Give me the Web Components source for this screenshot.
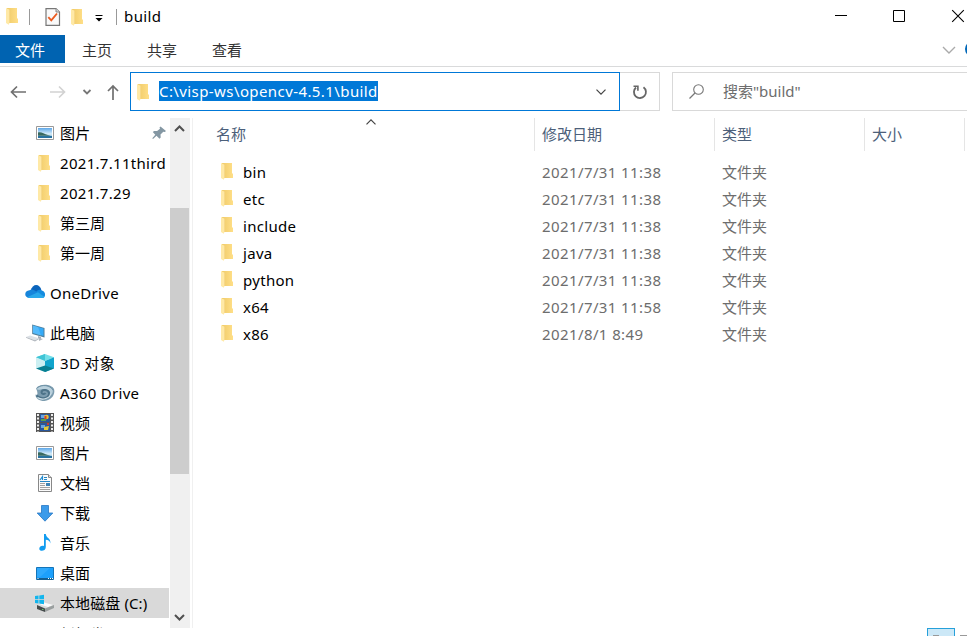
<!DOCTYPE html>
<html lang="zh-CN">
<head>
<meta charset="utf-8">
<title>build</title>
<style>
  html, body { margin: 0; height: 100%; overflow: hidden; }
  body {
    background: #fff;
    color: #000;
    font: 15px/20px "Noto Sans", "Noto Sans CJK SC", sans-serif;
  }
</style>
</head>
<body>
<explorer-window>
  <title-bar slot="top">build</title-bar>
  <ribbon-tabs slot="top">
    <ribbon-tab active>文件</ribbon-tab>
    <ribbon-tab>主页</ribbon-tab>
    <ribbon-tab>共享</ribbon-tab>
    <ribbon-tab>查看</ribbon-tab>
  </ribbon-tabs>
  <address-row slot="top">
    <span slot="path">C:\visp-ws\opencv-4.5.1\build</span>
    <span slot="search">搜索"build"</span>
  </address-row>

  <nav-pane slot="nav">
    <nav-item icon="picture" pinned>图片</nav-item>
    <nav-item icon="folder">2021.7.11third</nav-item>
    <nav-item icon="folder">2021.7.29</nav-item>
    <nav-item icon="folder" cjk>第三周</nav-item>
    <nav-item icon="folder" cjk>第一周</nav-item>
    <nav-item icon="onedrive" root>OneDrive</nav-item>
    <nav-item icon="pc" root cjk>此电脑</nav-item>
    <nav-item icon="cube">3D 对象</nav-item>
    <nav-item icon="a360">A360 Drive</nav-item>
    <nav-item icon="video" cjk>视频</nav-item>
    <nav-item icon="picture" cjk>图片</nav-item>
    <nav-item icon="document" cjk>文档</nav-item>
    <nav-item icon="download" cjk>下载</nav-item>
    <nav-item icon="music" cjk>音乐</nav-item>
    <nav-item icon="desktop" cjk>桌面</nav-item>
    <nav-item icon="disk" selected>本地磁盘 (C:)</nav-item>
    <nav-item icon="none" cjk last>新加卷</nav-item>
  </nav-pane>

  <file-list slot="files">
    <file-row date="2021/7/31 11:38" type="文件夹">bin</file-row>
    <file-row date="2021/7/31 11:38" type="文件夹">etc</file-row>
    <file-row date="2021/7/31 11:38" type="文件夹">include</file-row>
    <file-row date="2021/7/31 11:38" type="文件夹">java</file-row>
    <file-row date="2021/7/31 11:38" type="文件夹">python</file-row>
    <file-row date="2021/7/31 11:58" type="文件夹">x64</file-row>
    <file-row date="2021/8/1 8:49" type="文件夹">x86</file-row>
  </file-list>
</explorer-window>

<script>
// every icon is drawn on a 20x20 grid
const ICONS = {
  none: "",
  folder: `
    <defs><linearGradient id="g" x2="1"><stop stop-color="#f0cb69"/><stop offset="1" stop-color="#ffdf88"/></linearGradient></defs>
    <path fill="url(#g)" d="M5 2h10v10.500h1V17H5z"/>
    <path fill="#ffe9a6" d="M4 2l3.500 1.800V17l-.8 1.700L4 17z"/>
    <path fill="#f5d889" d="M7.200 4h.8v13h-.8z"/>`,
  picture: `
    <defs><linearGradient id="g" y2="1" x2="0"><stop stop-color="#5da7e8"/><stop offset=".6" stop-color="#d8eefa"/><stop offset="1" stop-color="#6fa5c8"/></linearGradient></defs>
    <path fill="#fff" stroke="#999" d="M1.500 3.500h17v13h-17z"/>
    <path fill="url(#g)" d="M3 5h14v10H3z"/>
    <path fill="#39695f" d="M3 9.500c3-1 6 1.500 10 2.500l3 .7H3z"/>
    <path fill="#2872a0" d="M3 13h14v2H3z"/>`,
  onedrive: `
    <path fill="#0a64bc" d="M5.500 8C8-.5 15 1 16.500 7.500L12 12z"/>
    <path fill="#1685db" d="M5 15C-1.500 15-1 7.500 4.500 7.200c2-1.200 4-.8 6 .8l3 3z"/>
    <path fill="#148bde" d="M10 10c2-3 5-4.200 6.800-2.600C20.800 7.800 21 14 18 15z"/>
    <path fill="#29a8ea" d="M2.500 14L13 9.200l6.400 4.500c-.7 1-1.400 1.300-2.400 1.300H5c-1 0-1.800-.4-2.500-1z"/>`,
  pc: `
    <path fill="#4e7e9b" d="M7.200 1.500L19.500 5v9.500L7.200 11z"/>
    <path fill="#35aaf7" d="M8 2.600l10.500 3v7.500L8 10z"/>
    <path fill="#7bceff" d="M8 2.600l5 1.400 3 8.400L8 10z" opacity=".45"/>
    <path fill="#a5afb9" d="M13 13l3 1v2l-3-.7z"/>
    <path fill="#dce1e6" d="M1 14l4-1.500 9 2.800-4 2z"/>
    <path fill="#b0b6bd" d="M1 14l9 3.300 4-2v.8l-4 2.400-9-3.700zM14 15l4 1-4 2z"/>`,
  cube: `
    <path fill="#72dfe8" d="M10 1l9 3.200L10 8 1 4.200z"/>
    <path fill="#cceff2" d="M1 4.200L10 8v11l-9-3.500z"/>
    <path fill="#10a4cc" d="M19 4.200L10 8v11l9-3.500z"/>
    <path fill="#087f91" d="M1 15.500l9-3 9 3-9 3.500z"/>
    <path fill="#40c4d5" d="M10 1v7L1 4.200z"/>`,
  a360: `
    <path fill="#7c9caf" d="M1 5.500C4 .5 16 .5 19 6c1.500 5-2 11.500-9.500 12C4 18 .5 15.500.5 11.500 3 13 3 9 1 5.500z"/>
    <path fill="#b9d0dc" d="M1.500 6C5 1 15 2 17.500 6.500c1 3-.5 5-2 6C16 8 12 5.500 8 6c-3 .3-4.500 1.500-6.500 0z"/>
    <path fill="none" stroke="#4d7389" stroke-width="2" d="M1.500 12.500c5 4.500 13 3 12.500-2.500-.5-3.500-7-4-7.500-.8 0 2 3 2.300 4 .8"/>
    <path fill="none" stroke="#d3e3eb" stroke-width="1.100" d="M2.500 14.500c5 3.500 13 .5 13-4"/>
    <path fill="none" stroke="#6f93a7" d="M2 5c5-4 13-3 16 2"/>`,
  video: `
    <path fill="#555" d="M1 0h18v19H1z"/>
    <path fill="#29579c" d="M5 1h10v8H5zM5 10h10v8H5z"/>
    <path stroke="#efefef" stroke-width="2" stroke-dasharray="2 1.500" d="M3 1v18M17 1v18"/>
    <path fill="#68a6e2" d="M6 2h4v3H6zM6 12h4v3H6z"/>
    <circle cx="11.500" cy="4" r="2.300" fill="#e8c335"/>
    <path fill="#d83c26" d="M9.500 3h2v3h-2z"/>
    <path fill="#58a04c" d="M6 6h5v2H6z"/>
    <path fill="#e2ca37" d="M9 14l5-1-1 4H9z"/>
    <path fill="#cf3d2e" d="M12 10h2v2h-2z"/>`,
  document: `
    <path fill="#fbfbfb" stroke="#888" d="M3.500 1.500h10l3 3v14h-13z"/>
    <path fill="#ddd" stroke="#888" d="M13.500 1.500v3h3"/>
    <path stroke="#2586c4" d="M9 4.500h3M9 6.500h3M5 8.500h10"/>
    <path fill="none" stroke="#1e8bd1" stroke-width="1.200" d="M5 7l2.500-3.500V7"/>
    <path stroke="#a2a2a2" d="M5 10.500h5M5 12.500h5M5 14.500h10M5 16.500h10"/>
    <path fill="#4084b4" d="M11 10h4v3h-4z"/>`,
  download: `<path fill="#3c9bea" stroke="#2676c4" stroke-width=".8" d="M6.500 2.500h7V10h4.300L10 18.200 2.200 10h4.300z"/>`,
  music: `
    <path fill="#119cf0" d="M9 1h1.800c.2 4 5.500 4.300 4.500 9.500-.3-2.500-2-3.500-4.500-3.700V14c0 4.500-6.500 5-6.500 1.800 0-2.300 2.500-3.500 4.700-2.700z"/>`,
  desktop: `
    <path fill="#1da0fb" stroke="#1474b8" d="M1.500 4.500h17v12h-17z"/>
    <path fill="#52bafe" d="M2 5h13L5 14H2z" opacity=".35"/>
    <path fill="#145f91" d="M2 15h16v2H2z"/>
    <path stroke="#fff" d="M2.500 15.500h1M13 15.500h1M15 15.500h1M17 15.500h1"/>`,
  disk: `
    <path fill="#d9dcdc" d="M2 12l7-3 10 3-9 4z"/>
    <path fill="#fbfbfb" d="M5 11.500l4-2 9 2.600-5 2z"/>
    <path fill="#454b4c" d="M2 12l8 3.500V19l-8-3z"/>
    <path fill="#9a9f9f" d="M10 15.500l9-3.500v3L10 19z"/>
    <path fill="#68c46b" d="M7 16h1.500v1H7z"/>
    <path fill="#13b5ed" d="M0 3l3.500-.5v3.700H0zM4.300 2.400L9 1.800v4.400H4.300zM0 7h3.500v3.600L0 10zM4.300 7H9v4.200l-4.700-.6z"/>`,
  check: `
    <path fill="#fafafa" stroke="#777" stroke-width="1.200" d="M3 1.600h10l3.500 3.500v13.300H3z"/>
    <path fill="#d5d5d5" stroke="#888" d="M13 1.600V5h3.500"/>
    <path fill="none" stroke="#eb5b20" stroke-width="1.900" d="M5.300 10.200l3 3.200L14 6.500"/>`,
  pin: `
    <path fill="#8497a3" d="M11.500 3.500L17 8l-1.200 1-1.500-.2-2.800 2.700.2 3-1.200 1.200-3-3L4 16l-.7-.7 3-3.600-2.500-2.600 1.300-1.200 3 .2L11 5.700l-.5-1.300z"/>`,
  back: `<path fill="none" stroke="#707070" stroke-width="1.700" d="M18 10H3.500M9 4.500L3.500 10 9 15.500"/>`,
  forward: `<path fill="none" stroke="#d2d2d2" stroke-width="1.700" d="M2 10h14.500M11 4.500l5.500 5.500-5.500 5.500"/>`,
  up: `<path fill="none" stroke="#707070" stroke-width="1.700" d="M10 18V4M5 9l5-5 5 5"/>`,
  recent: `<path fill="none" stroke="#777" stroke-width="1.800" d="M6.500 8L10 11.500 13.500 8"/>`,
  refresh: `
    <path fill="none" stroke="#666" stroke-width="1.800" d="M13.500 5.200A6 6 0 1 1 6 5.500"/>
    <path fill="none" stroke="#666" stroke-width="1.600" d="M3.500 4.300h4.400v4.500"/>`,
  search: `
    <circle cx="11.500" cy="7.500" r="4.800" fill="none" stroke="#777" stroke-width="1.100"/>
    <path stroke="#777" stroke-width="1.200" d="M8 11l-5.500 5.500"/>`,
  chevron: `<path fill="none" stroke="#444" stroke-width="1.200" d="M5.500 7.700l4.500 4.500 4.500-4.500"/>`,
  expand: `<path fill="none" stroke="#aaa" stroke-width="1.400" d="M4 7l6 6 6-6"/>`,
  minimize: `<path fill="#000" d="M4 9h12v1H4z"/>`,
  maximize: `<path fill="none" stroke="#000" d="M4.500 4.500h11v11h-11z"/>`,
  close: `<path fill="none" stroke="#000" stroke-width="1.100" d="M4.200 4.200l11.600 11.600M15.800 4.200L4.200 15.800"/>`,
  customize: `<path fill="#000" d="M6.500 6h7v1h-7zM6.500 9h7L10 12.500z"/>`
};

const define = (name, html, setup) => {
  customElements.define(name, class extends HTMLElement {
    constructor() {
      super();
      this.attachShadow({ mode: "open" }).innerHTML = html;
      if (setup) setup(this, this.shadowRoot);
    }
  });
};

// the icon can be named before or after the element is made
customElements.define("ui-icon", class extends HTMLElement {
  static observedAttributes = ["name"];

  constructor() {
    super();
    this.attachShadow({ mode: "open" }).innerHTML = /* html */ `
      <style>
        :host { display: block; flex: none; width: 20px; height: 20px; }
        svg { display: block; width: 100%; height: 100%; }
      </style>
      <svg viewBox="0 0 20 20" aria-hidden="true"></svg>`;
  }

  attributeChangedCallback(attr, old, value) {
    this.shadowRoot.querySelector("svg").innerHTML = ICONS[value] || "";
  }
});

define("explorer-window", /* html */ `
  <style>
    :host { display: flex; flex-direction: column; height: 636px; width: 967px; overflow: hidden; position: relative; }
    main { display: flex; margin-top: 7px; height: 510px; }
    .views { position: absolute; left: 927px; top: 628px; display: flex; gap: 5px; }
    .views i { box-sizing: border-box; width: 28px; height: 22px; }
    .views i:first-child { border: 1px solid #26a0da; background: #cce8f7; padding: 6px 5px; }
    .views i::before { content: ""; display: block; width: 6px; height: 1px; background: #999; }
    .views i:last-child { padding-top: 7px; }
    .views i:last-child::before { width: 20px; }
  </style>
  <slot name="top"></slot>
  <main><slot name="nav"></slot><slot name="files"></slot></main>
  <div class="views"><i></i><i></i></div>`);

define("title-bar", /* html */ `
  <style>
    :host { display: flex; height: 35px; box-sizing: border-box; padding-bottom: 3px; align-items: center; letter-spacing: .4px; }
    .sep { width: 1px; height: 16px; margin-top: 2px; background: #999; }
    .name { margin-left: 7px; }
    .buttons { display: flex; margin-left: auto; margin-right: -1px; gap: 38px; }
  </style>
  <ui-icon name="folder" style="margin-left:2px"></ui-icon>
  <div class="sep" style="margin-left:7px"></div>
  <ui-icon name="check" style="margin:1px 0 0 13px"></ui-icon>
  <ui-icon name="folder" style="margin:1px 0 0 4px"></ui-icon>
  <ui-icon name="customize" style="margin-left:2px;margin-top:6px"></ui-icon>
  <div class="sep" style="margin-left:7px"></div>
  <div class="name"><slot></slot></div>
  <div class="buttons">
    <ui-icon name="minimize"></ui-icon>
    <ui-icon name="maximize"></ui-icon>
    <ui-icon name="close" style="margin-left:1px"></ui-icon>
  </div>`);

define("ribbon-tabs", /* html */ `
  <style>
    :host { display: flex; height: 32px; box-sizing: border-box; border-bottom: 1px solid #d9dadb; }
    .end { margin-left: auto; display: flex; padding-top: 5px; }
    .help { width: 16px; height: 16px; margin: 1px -14px 0 6px; border-radius: 50%; background: #0067b8; }
  </style>
  <slot></slot>
  <div class="end"><ui-icon name="expand"></ui-icon><div class="help"></div></div>`);

define("ribbon-tab", /* html */ `
  <style>
    :host { display: block; box-sizing: border-box; width: 65px; height: 28px; padding-left: 17px; line-height: 30px; color: #333; }
    :host([active]) { background: #0063b1; color: #fff; padding-left: 15px; }
  </style>
  <slot></slot>`);

define("address-row", /* html */ `
  <style>
    :host { display: flex; margin-top: 5px; height: 39px; overflow: hidden; }
    .arrows { display: flex; flex: none; align-items: center; width: 130px; box-sizing: border-box; padding-left: 8px; }
    .path, .refresh, .search { box-sizing: border-box; flex: none; display: flex; align-items: center; border: 1px solid #d9d9d9; }
    .path { width: 490px; border-color: #0078d7; padding: 0 8px 0 2px; }
    .refresh { width: 40px; border-left: 0; justify-content: center; }
    .search { width: 310px; margin-left: 12px; padding-left: 14px; color: #6d6d6d; }
    .search div { margin: -1px 0 0 16px; }
    .text { background: #0078d7; color: #fff; margin: -1px auto 0 6px; letter-spacing: .41px; white-space: nowrap; }
  </style>
  <div class="arrows">
    <ui-icon name="back"></ui-icon>
    <ui-icon name="forward" style="margin-left:20px"></ui-icon>
    <ui-icon name="recent" style="margin-left:9px"></ui-icon>
    <ui-icon name="up" style="margin-left:6px"></ui-icon>
  </div>
  <div class="path">
    <ui-icon name="folder"></ui-icon>
    <div class="text"><slot name="path"></slot></div>
    <ui-icon name="chevron"></ui-icon>
  </div>
  <div class="refresh"><ui-icon name="refresh"></ui-icon></div>
  <div class="search"><ui-icon name="search"></ui-icon><div><slot name="search"></slot></div></div>`);

define("nav-pane", /* html */ `
  <style>
    :host { display: flex; width: 192px; height: 510px; flex: none; border-right: 1px solid #f0f0f0; }
    .items { width: 170px; overflow: hidden; }
    .bar { width: 20px; background: #f0f0f0; display: flex; flex-direction: column; }
    .bar svg { width: 20px; height: 20px; flex: none; }
    .thumb { width: 19px; height: 266px; margin: 70px 0 auto; background: #cdcdcd; }
    path { fill: none; stroke: #505050; stroke-width: 2; }
  </style>
  <div class="items"><slot></slot></div>
  <div class="bar">
    <svg><path d="M5 13l4.500-4.500L14 13"/></svg>
    <div class="thumb"></div>
    <svg><path d="M5 7l4.500 4.500L14 7"/></svg>
  </div>`);

define("nav-item", /* html */ `
  <style>
    :host { display: flex; align-items: center; width: 169px; height: 30px; box-sizing: border-box; padding-left: 35px; letter-spacing: .3px; white-space: nowrap; }
    :host([cjk]) { letter-spacing: 0; }
    :host([root]) { padding-left: 25px; margin: 10px 0 0; }
    :host([selected]) { letter-spacing: .1px; background: #d9d9d9; }
    :host([last]) { padding-top: 2px; }
    :host([icon="folder"]) ui-icon { margin: 0 1px 0 -1px; }
    .label { margin-left: 5px; }
    .pin { margin-left: auto; display: none; }
    :host([pinned]) .pin { display: block; }
  </style>
  <ui-icon></ui-icon>
  <div class="label"><slot></slot></div>
  <div class="pin"><ui-icon name="pin"></ui-icon></div>`,
  (el, root) => root.querySelector("ui-icon").setAttribute("name", el.getAttribute("icon")));

define("file-list", /* html */ `
  <style>
    :host { display: block; flex: 1; min-width: 0; overflow: hidden; }
    header { position: relative; display: grid; grid-template-columns: 342px 180px 150px 100px; height: 33px; margin-bottom: 8px; color: #4c607a; }
    header div { box-sizing: border-box; border-right: 1px solid #e5e5e5; padding-left: 7px; line-height: 33px; }
    header div:first-child { padding-left: 23px; }
    .sort { position: absolute; left: 168px; top: -6px; }
    .sort ui-icon { transform: rotate(180deg); }
  </style>
  <header>
    <div>名称</div><div>修改日期</div><div>类型</div><div>大小</div>
    <span class="sort"><ui-icon name="chevron"></ui-icon></span>
  </header>
  <slot></slot>`);

define("file-row", /* html */ `
  <style>
    :host { display: grid; grid-template-columns: 349px 180px 150px; height: 27px; line-height: 27px; color: #6d6d6d; }
    .name { display: flex; color: #000; padding-left: 24px; letter-spacing: .3px; }
    .name ui-icon { margin-top: 2px; }
    .name span { margin-left: 6px; }
    .date { letter-spacing: .4px; }
  </style>
  <div class="name"><ui-icon name="folder"></ui-icon><span><slot></slot></span></div>
  <div class="date"></div>
  <div class="type"></div>`,
  (el, root) => {
    root.querySelector(".date").textContent = el.getAttribute("date");
    root.querySelector(".type").textContent = el.getAttribute("type");
  });
</script>
</body>
</html>
